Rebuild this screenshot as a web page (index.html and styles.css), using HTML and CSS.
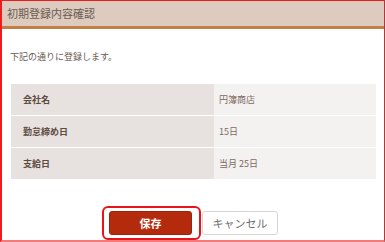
FILE: index.html
```html
<!DOCTYPE html>
<html lang="ja">
<head>
<meta charset="utf-8">
<title>初期登録内容確認</title>
<link rel="stylesheet" href="styles.css">
</head>
<body>
<div class="frame">
  <div class="header">初期登録内容確認</div>
  <div class="content">
    <p class="message">下記の通りに登録します。</p>
    <div class="info">
      <div class="label">会社名</div><div class="value">円簿商店</div>
      <div class="label">勤怠締め日</div><div class="value">15日</div>
      <div class="label">支給日</div><div class="value">当月 25日</div>
    </div>
    <div class="actions">
      <button class="btn btn-save" type="button">保存</button>
      <button class="btn btn-cancel" type="button">キャンセル</button>
    </div>
  </div>
</div>
</body>
</html>
```
FILE: styles.css
```css
body {
  margin: 0;
  background: #fff;
  font-family: "Noto Sans CJK JP", "Noto Sans", sans-serif;
}
.frame {
  box-sizing: border-box;
  width: 385px;
  height: 242px;
  border-top: 1px solid #f01c1c;
  border-left: 2px solid #f01c1c;
  border-right: 1px solid #f01c1c;
  border-bottom: 2px solid #f47a7a;
  overflow: hidden;
}
.header {
  height: 25px;
  line-height: 25px;
  background: #dccbbe;
  border-bottom: 3px solid #c47f45;
  padding-left: 5px;
  font-size: 11px;
  color: #6b5b52;
}
.content {
  padding: 0 8px 0 9px;
}
.message {
  margin: 22px 0 0 -1px;
  font-size: 9px;
  line-height: 12px;
  color: #6b5b52;
}
.info {
  display: grid;
  grid-template-columns: 203px 162px;
  grid-auto-rows: 31px;
  row-gap: 1px;
  margin-top: 21px;
  background: #fff;
  font-size: 9px;
}
.label {
  display: flex;
  align-items: center;
  padding-left: 12px;
  background: #e7e1e0;
  color: #5e4b40;
  font-weight: bold;
}
.value {
  display: flex;
  align-items: center;
  padding-left: 5px;
  background: #f4f1f1;
  color: #7d6a5f;
}
.actions {
  display: flex;
  justify-content: center;
  gap: 10px;
  margin-top: 32px;
}
.btn {
  box-sizing: border-box;
  height: 24px;
  padding: 0;
  font-family: inherit;
  font-size: 11px;
  border-radius: 3px;
  cursor: pointer;
}
.btn-save {
  position: relative;
  width: 83px;
  background: #b42a0c;
  border: 1px solid #a02309;
  color: #fff;
  font-weight: bold;
}
.btn-save::after {
  content: "";
  position: absolute;
  top: -6px;
  bottom: -6px;
  left: -8px;
  right: -10px;
  border: 2px solid #e8141c;
  border-radius: 6px;
}
.btn-cancel {
  width: 76px;
  background: #fff;
  border: 1px solid #dcd6d3;
  color: #707070;
}
```
